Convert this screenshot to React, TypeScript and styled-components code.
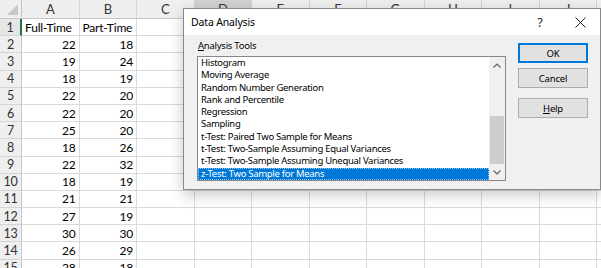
import styled, { createGlobalStyle } from 'styled-components';

const GlobalStyle = createGlobalStyle`
  html, body {
    margin: 0;
    padding: 0;
    background: #ffffff;
    overflow: hidden;
  }
`;

const Page = styled.div`
  position: relative;
  width: 601px;
  height: 268px;
  overflow: hidden;
  background: #ffffff;
`;

const Sheet = styled.div`
  display: grid;
  grid-template-columns: 22px repeat(11, 57.5px);
  grid-template-rows: 19px;
  grid-auto-rows: 17.2px;
  font-family: Lato, 'Liberation Sans', sans-serif;
  font-size: 12px;
  letter-spacing: -0.2px;
  color: #000;
`;

const Corner = styled.div`
  position: relative;
  background: #efefef;
  border-right: 1px solid #c6c6c6;
  border-bottom: 1px solid #c6c6c6;
  box-sizing: border-box;

  &::after {
    content: '';
    position: absolute;
    right: 3px;
    bottom: 3px;
    width: 0;
    height: 0;
    border-left: 11px solid transparent;
    border-bottom: 11px solid #c9c9c9;
  }
`;

const ColHead = styled.div<{ $active?: boolean }>`
  display: flex;
  align-items: center;
  justify-content: center;
  background: ${(p) => (p.$active ? '#d2d2d2' : '#efefef')};
  border-right: 1px solid #d4d4d4;
  border-bottom: ${(p) => (p.$active ? '2px solid #217346' : '1px solid #c6c6c6')};
  box-sizing: border-box;
  color: #333;
  font-size: 13px;
`;

const RowHead = styled.div<{ $active?: boolean }>`
  display: flex;
  align-items: center;
  justify-content: center;
  background: ${(p) => (p.$active ? '#e6e6e6' : '#efefef')};
  border-right: ${(p) => (p.$active ? '2px solid #217346' : '1px solid #c6c6c6')};
  border-bottom: 1px solid #d4d4d4;
  box-sizing: border-box;
  color: #333;
  font-size: 12.5px;
`;

const Cell = styled.div<{ $num?: boolean }>`
  display: flex;
  align-items: center;
  justify-content: ${(p) => (p.$num ? 'flex-end' : 'flex-start')};
  padding: 0 3px;
  border-right: 1px solid #dadada;
  border-bottom: 1px solid #dadada;
  box-sizing: border-box;
  white-space: nowrap;
  overflow: hidden;
`;

const Dialog = styled.div`
  position: absolute;
  left: 183px;
  top: 8px;
  width: 418px;
  height: 182px;
  box-sizing: border-box;
  border: 1px solid #8a8a8a;
  background: #f0f0f0;
  box-shadow: 0 5px 14px rgba(0, 0, 0, 0.22);
  display: flex;
  flex-direction: column;
  font-family: 'Noto Sans', 'Open Sans', sans-serif;
  color: #000;
`;

const TitleBar = styled.div`
  height: 26px;
  background: #ffffff;
  display: flex;
  align-items: center;
  padding-left: 7px;
  font-size: 10.5px;
  letter-spacing: -0.15px;
`;

const Title = styled.div`
  flex: 1;
`;

const TitleButton = styled.div`
  width: 40px;
  display: flex;
  align-items: center;
  justify-content: center;
  font-size: 12px;
  color: #222;
`;

const Body = styled.div`
  flex: 1;
  display: flex;
  padding: 3px 12px 0 13px;
  gap: 12px;
`;

const ToolColumn = styled.div`
  display: flex;
  flex-direction: column;
`;

const Label = styled.div`
  font-size: 9.5px;
  letter-spacing: -0.25px;
  height: 18px;
  line-height: 16px;
  padding-left: 1px;
`;

const ListBox = styled.div`
  width: 309px;
  height: 125px;
  box-sizing: border-box;
  border: 1px solid #828790;
  background: #ffffff;
  display: flex;
`;

const Items = styled.div`
  flex: 1;
  display: flex;
  flex-direction: column;
`;

const Item = styled.div<{ $selected?: boolean }>`
  height: 12.3px;
  line-height: 12px;
  font-size: 9.5px;
  letter-spacing: -0.3px;
  padding-left: 3px;
  white-space: nowrap;
  box-sizing: border-box;
  background: ${(p) => (p.$selected ? '#0078d7' : 'transparent')};
  color: ${(p) => (p.$selected ? '#ffffff' : '#000000')};
  outline: ${(p) => (p.$selected ? '1px dotted #9bc6f0' : 'none')};
  outline-offset: -1px;
`;

const ScrollBar = styled.div`
  width: 16px;
  background: #f0f0f0;
  display: flex;
  flex-direction: column;
`;

const Arrow = styled.div`
  height: 16px;
  display: flex;
  align-items: center;
  justify-content: center;
`;

const Track = styled.div`
  flex: 1;
  display: flex;
  flex-direction: column;
  justify-content: flex-end;
  padding: 0 1px;
`;

const Thumb = styled.div`
  height: 48px;
  background: #cdcdcd;
`;

const ButtonColumn = styled.div`
  display: flex;
  flex-direction: column;
  padding-top: 5px;
`;

const Button = styled.div<{ $default?: boolean; $gap?: number }>`
  width: 70px;
  height: 20px;
  box-sizing: border-box;
  margin-top: ${(p) => p.$gap ?? 0}px;
  background: #e1e1e1;
  border: 1px solid ${(p) => (p.$default ? '#0078d7' : '#adadad')};
  box-shadow: ${(p) => (p.$default ? 'inset 0 0 0 1px #0078d7' : 'none')};
  display: flex;
  align-items: center;
  justify-content: center;
  font-size: 9.5px;
  letter-spacing: -0.2px;
`;

const Chevron = ({ up }: { up?: boolean }) => (
  <svg width="8" height="5" viewBox="0 0 8 5">
    <path
      d={up ? 'M0.5 4.5 L4 1 L7.5 4.5' : 'M0.5 0.5 L4 4 L7.5 0.5'}
      fill="none"
      stroke="#606060"
      strokeWidth="1.2"
    />
  </svg>
);

const cols = ['A', 'B', 'C', 'D', 'E', 'F', 'G', 'H', 'I', 'J', 'K'];

const data: [string, string][] = [
  ['Full-Time', 'Part-Time'],
  ['22', '18'],
  ['19', '24'],
  ['18', '19'],
  ['22', '20'],
  ['22', '20'],
  ['25', '20'],
  ['18', '26'],
  ['22', '32'],
  ['18', '19'],
  ['21', '21'],
  ['27', '19'],
  ['30', '30'],
  ['26', '29'],
  ['28', '18'],
];

const tools = [
  'Histogram',
  'Moving Average',
  'Random Number Generation',
  'Rank and Percentile',
  'Regression',
  'Sampling',
  't-Test: Paired Two Sample for Means',
  't-Test: Two-Sample Assuming Equal Variances',
  't-Test: Two-Sample Assuming Unequal Variances',
  'z-Test: Two Sample for Means',
];

export default function App() {
  return (
    <Page>
      <GlobalStyle />
      <Sheet>
        <Corner />
        {cols.map((c) => (
          <ColHead key={c} $active={c === 'D'}>
            {c}
          </ColHead>
        ))}
        {data.map(([a, b], i) => (
          <>
            <RowHead key={`r${i}`} $active={i === 0}>
              {i + 1}
            </RowHead>
            <Cell key={`a${i}`} $num={i > 0}>
              {a}
            </Cell>
            <Cell key={`b${i}`} $num={i > 0}>
              {b}
            </Cell>
            {cols.slice(2).map((c) => (
              <Cell key={`${c}${i}`} />
            ))}
          </>
        ))}
      </Sheet>

      <Dialog>
        <TitleBar>
          <Title>Data Analysis</Title>
          <TitleButton>?</TitleButton>
          <TitleButton>
            <svg width="11" height="11" viewBox="0 0 11 11">
              <path d="M0.5 0.5 L10.5 10.5 M10.5 0.5 L0.5 10.5" stroke="#222" strokeWidth="1" />
            </svg>
          </TitleButton>
        </TitleBar>
        <Body>
          <ToolColumn>
            <Label>
              <u>A</u>nalysis Tools
            </Label>
            <ListBox>
              <Items>
                {tools.map((t, i) => (
                  <Item key={t} $selected={i === tools.length - 1}>
                    {t}
                  </Item>
                ))}
              </Items>
              <ScrollBar>
                <Arrow>
                  <Chevron up />
                </Arrow>
                <Track>
                  <Thumb />
                </Track>
                <Arrow>
                  <Chevron />
                </Arrow>
              </ScrollBar>
            </ListBox>
          </ToolColumn>
          <ButtonColumn>
            <Button $default>OK</Button>
            <Button $gap={5}>Cancel</Button>
            <Button $gap={10}>
              <span>
                <u>H</u>elp
              </span>
            </Button>
          </ButtonColumn>
        </Body>
      </Dialog>
    </Page>
  );
}
